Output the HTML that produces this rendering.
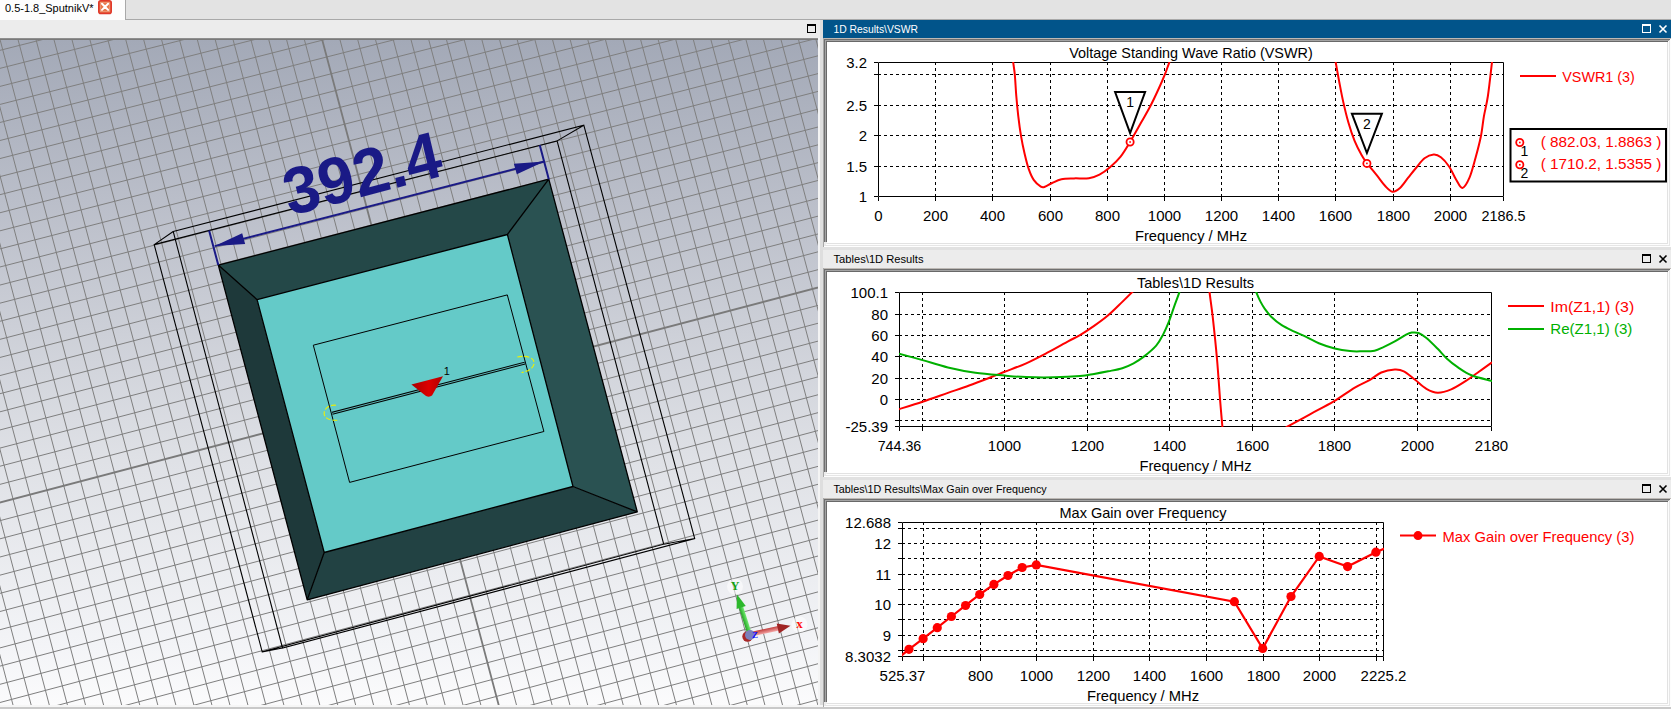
<!DOCTYPE html>
<html><head><meta charset="utf-8"><style>
html,body{margin:0;padding:0;width:1671px;height:709px;overflow:hidden;background:#c9c9c9}
svg{position:absolute;left:0;top:0;font-family:"Liberation Sans", sans-serif}
</style></head><body>
<svg width="1671" height="709" viewBox="0 0 1671 709">
<defs><linearGradient id="bg3d" x1="0" y1="0" x2="0" y2="1"><stop offset="0" stop-color="#a3a9b7"/><stop offset="0.24" stop-color="#babec9"/><stop offset="0.633" stop-color="#dfe1e6"/><stop offset="0.91" stop-color="#f3f4f7"/><stop offset="1" stop-color="#fbfbfc"/></linearGradient><clipPath id="clipv"><rect x="0" y="40" width="818" height="665"/></clipPath></defs>
<rect x="0" y="40" width="818" height="665" fill="url(#bg3d)" />
<g clip-path="url(#clipv)">
<path d="M-192.46 63.02L40.49 946.97M-175.48 58.72L57.45 942.36M-158.50 54.42L74.40 937.76M-141.53 50.13L91.33 933.15M-124.58 45.84L108.26 928.55M-107.64 41.55L125.17 923.95M-90.71 37.26L142.08 919.36M-73.79 32.98L158.97 914.77M-56.88 28.70L175.85 910.18M-39.98 24.42L192.72 905.59M-23.10 20.15L209.57 901.01M-6.22 15.88L226.42 896.43M10.64 11.61L243.25 891.86M27.49 7.34L260.08 887.28M44.33 3.08L276.89 882.71M61.16 -1.18L293.69 878.15M77.98 -5.43L310.48 873.58M94.79 -9.69L327.26 869.02M111.58 -13.94L344.03 864.46M128.37 -18.19L360.78 859.91M145.14 -22.43L377.53 855.36M161.90 -26.68L394.26 850.81M178.65 -30.92L410.98 846.26M195.39 -35.15L427.70 841.72M212.12 -39.39L444.40 837.18M228.84 -43.62L461.09 832.65M245.55 -47.85L477.76 828.11M262.24 -52.07L494.43 823.58M278.93 -56.30L511.09 819.05M312.26 -64.74L544.36 810.01M328.91 -68.95L560.99 805.49M345.55 -73.16L577.60 800.97M362.18 -77.37L594.20 796.46M378.80 -81.58L610.79 791.95M395.41 -85.78L627.36 787.45M412.00 -89.98L643.93 782.94M428.59 -94.18L660.49 778.44M445.16 -98.37L677.03 773.95M461.72 -102.57L693.57 769.45M478.28 -106.76L710.09 764.96M494.82 -110.94L726.60 760.47M511.35 -115.13L743.10 755.99M527.87 -119.31L759.59 751.50M544.37 -123.49L776.07 747.02M560.87 -127.66L792.54 742.55M577.36 -131.84L809.00 738.07M593.83 -136.01L825.45 733.60M610.30 -140.17L841.88 729.14M626.75 -144.34L858.31 724.67M643.19 -148.50L874.72 720.21M659.63 -152.66L891.12 715.75M676.05 -156.82L907.52 711.30M692.46 -160.97L923.90 706.84M708.86 -165.12L940.27 702.39M725.25 -169.27L956.63 697.95M741.62 -173.42L972.98 693.50M757.99 -177.56L989.32 689.06M774.35 -181.70L1005.64 684.62M790.69 -185.84L1021.96 680.19M-192.46 63.02L790.69 -185.84M-188.00 79.97L795.13 -169.23M-183.53 96.92L799.56 -152.62M-179.06 113.88L804.00 -136.01M-174.59 130.83L808.44 -119.40M-170.12 147.79L812.87 -102.78M-165.65 164.75L817.31 -86.17M-161.18 181.71L821.75 -69.55M-156.71 198.67L826.19 -52.93M-152.24 215.64L830.62 -36.31M-147.77 232.61L835.06 -19.68M-143.30 249.58L839.50 -3.06M-138.83 266.55L843.94 13.57M-134.35 283.52L848.38 30.20M-129.88 300.49L852.83 46.83M-125.41 317.47L857.27 63.46M-120.93 334.45L861.71 80.10M-116.46 351.43L866.15 96.74M-111.98 368.41L870.60 113.37M-107.51 385.40L875.04 130.02M-103.03 402.38L879.48 146.66M-98.55 419.37L883.93 163.30M-94.07 436.36L888.37 179.95M-89.60 453.36L892.82 196.60M-85.12 470.35L897.27 213.24M-80.64 487.35L901.71 229.90M-76.16 504.34L906.16 246.55M-67.20 538.35L915.06 279.86M-62.72 555.35L919.50 296.52M-58.24 572.36L923.95 313.18M-53.75 589.36L928.40 329.84M-49.27 606.37L932.85 346.51M-44.79 623.38L937.30 363.17M-40.30 640.40L941.75 379.84M-35.82 657.41L946.21 396.51M-31.33 674.43L950.66 413.18M-26.85 691.45L955.11 429.86M-22.36 708.47L959.56 446.53M-17.88 725.49L964.02 463.21M-13.39 742.52L968.47 479.89M-8.90 759.55L972.93 496.57M-4.42 776.58L977.38 513.26M0.07 793.61L981.84 529.94M4.56 810.64L986.29 546.63M9.05 827.67L990.75 563.32M13.54 844.71L995.21 580.01M18.03 861.75L999.66 596.70M22.52 878.79L1004.12 613.39M27.01 895.83L1008.58 630.09M31.50 912.88L1013.04 646.79M36.00 929.92L1017.50 663.49M40.49 946.97L1021.96 680.19" stroke="#7f7f7f" stroke-width="1" fill="none"/>
<path d="M295.60 -60.52L527.73 814.53M-71.68 521.34L910.61 263.20" stroke="#7a7a7a" stroke-width="1.8" fill="none"/>
<path d="M173.2 231.5L583.8 125.2L694.7 538.5L282.5 648.0Z M154.2 244.6L557.1 140.9L663.7 544.2L262.2 651.9Z M154.2 244.6L173.2 231.5 M583.8 125.2L557.1 140.9 M694.7 538.5L663.7 544.2 M262.2 651.9L282.5 648.0" stroke="#000" stroke-width="1.1" fill="none"/>
<polygon points="218.30,265.10 548.80,179.20 507.40,234.50 257.10,299.70" fill="#244848"/>
<polygon points="548.80,179.20 637.30,511.90 573.00,486.50 507.40,234.50" fill="#2a5252"/>
<polygon points="637.30,511.90 307.20,599.90 324.20,552.50 573.00,486.50" fill="#224243"/>
<polygon points="307.20,599.90 218.30,265.10 257.10,299.70 324.20,552.50" fill="#1e393a"/>
<polygon points="257.10,299.70 507.40,234.50 573.00,486.50 324.20,552.50" fill="#64cac8"/>
<path d="M218.3 265.1L548.8 179.2L637.3 511.9L307.2 599.9Z M257.1 299.7L507.4 234.5L573.0 486.5L324.2 552.5Z M218.3 265.1L257.1 299.7 M548.8 179.2L507.4 234.5 M637.3 511.9L573.0 486.5 M307.2 599.9L324.2 552.5" stroke="#000" stroke-width="1.3" fill="none" stroke-linejoin="round"/>
<polygon points="313.30,345.20 507.30,294.90 543.90,431.50 349.60,482.40" fill="none" stroke="#000" stroke-width="1"/>
<path d="M332.2 413.3 L524.9 363.1" stroke="#000" stroke-width="3" fill="none"/>
<path d="M332.2 413.3 L524.9 363.1" stroke="#66caca" stroke-width="0.9" fill="none"/>
<path d="M336 405.2 C322 403.5 317 423 339.8 420" stroke="#f0f000" stroke-width="1.1" fill="none" stroke-dasharray="5 2"/>
<path d="M517.3 357 C539 353 539 370 521.5 372.5" stroke="#f0f000" stroke-width="1.1" fill="none" stroke-dasharray="5 2"/>
<linearGradient id="gcone" x1="0" y1="0" x2="1" y2="0"><stop offset="0" stop-color="#a80000"/><stop offset="0.55" stop-color="#dd0000"/><stop offset="1" stop-color="#b00000"/></linearGradient>
<path d="M411.4 384.4 L443 376.2 L432 395.5 Q429.5 397.5 426 396 Z" fill="url(#gcone)"/>
<text x="446.80" y="374.80" font-size="11" fill="#000" text-anchor="middle" >1</text>
<path d="M209.1 230.6 L218.3 265.1 M539.8 145.3 L548.8 179.2" stroke="#1a1a86" stroke-width="2" fill="none"/>
<path d="M214.7 246.1 L544.3 161.5" stroke="#1a1a86" stroke-width="2" fill="none"/>
<polygon points="214.70,246.10 245.13,243.97 242.20,233.31" fill="#1a1a86"/>
<polygon points="544.30,161.50 513.87,163.63 516.80,174.29" fill="#1a1a86"/>
<text transform="matrix(0.9673,-0.2535,0.23,0.9732,289.5,216)" font-size="66" font-weight="bold" fill="#1a1a86" textLength="161" lengthAdjust="spacingAndGlyphs">392.4</text>
<circle cx="735" cy="586.5" r="8" fill="#ffffff" opacity="0.55"/>
<circle cx="799.5" cy="624.5" r="8" fill="#ffffff" opacity="0.55"/>
<linearGradient id="gy" gradientUnits="userSpaceOnUse" x1="751.6" y1="632.8" x2="747.4" y2="634.2"><stop offset="0" stop-color="#6fe86f"/><stop offset="1" stop-color="#1f9f1f"/></linearGradient>
<polygon points="751.59,632.83 742.96,605.91 738.77,607.25 747.41,634.17" fill="url(#gy)"/>
<polygon points="736.90,594.20 745.75,606.07 736.60,609.00" fill="#2cb82c"/>
<linearGradient id="gx" gradientUnits="userSpaceOnUse" x1="752.5" y1="636.2" x2="751.5" y2="631.8"><stop offset="0" stop-color="#f0a0a0"/><stop offset="1" stop-color="#c03a3a"/></linearGradient>
<polygon points="752.48,636.25 779.24,630.55 778.28,626.05 751.52,631.75" fill="url(#gx)"/>
<polygon points="790.50,625.80 778.87,633.59 776.70,623.42" fill="#a02424"/>
<circle cx="747.5" cy="636.5" r="5.2" fill="#a82828"/>
<circle cx="750" cy="635" r="5" fill="#7a80bb"/>
<text x="755" y="638" font-size="9" font-weight="bold" fill="#1010ff" font-family="Liberation Serif" text-anchor="middle">Z</text>
<text x="735.2" y="589.8" font-size="12" font-weight="bold" fill="#10a010" font-family="Liberation Serif" text-anchor="middle">Y</text>
<text x="799.5" y="627.8" font-size="13" font-weight="bold" fill="#ff1010" font-family="Liberation Serif" text-anchor="middle">x</text>
</g>
<rect x="0" y="0" width="1671" height="20" fill="#e3e3e3" />
<rect x="125" y="19" width="1546" height="1" fill="#a9a9a9" />
<rect x="125" y="0" width="1" height="20" fill="#a9a9a9" />
<rect x="0" y="0" width="125" height="20" fill="#fdfdfd" />
<text x="5.00" y="11.50" font-size="11" fill="#000" text-anchor="start" textLength="88.50" lengthAdjust="spacingAndGlyphs" >0.5-1.8_SputnikV*</text>
<rect x="98.8" y="0.8" width="12.4" height="12.6" rx="2" ry="2" fill="#e9784a" stroke="#e0382a" stroke-width="1.6"/><rect x="100.5" y="2.5" width="9" height="9" fill="none" stroke="#ee9a78" stroke-width="0.8"/>
<path d="M102 3.8 L108.1 9.9 M108.1 3.8 L102 9.9" stroke="#fff" stroke-width="2" stroke-linecap="round"/>
<rect x="0" y="20" width="823" height="18" fill="#ececec" />
<rect x="807.5" y="24.5" width="8" height="8" fill="none" stroke="#000" stroke-width="1"/>
<rect x="807" y="24" width="9" height="2" fill="#000" />
<rect x="0" y="38" width="818" height="1" fill="#8e8e8e" />
<rect x="0" y="39" width="818" height="1" fill="#7a7a7a" />
<rect x="818" y="38" width="2" height="671" fill="#f4f4f4" />
<rect x="820" y="20" width="3" height="689" fill="#dedede" />
<rect x="823" y="20" width="848" height="689" fill="#ececec" />
<rect x="0" y="705" width="823" height="2" fill="#f6f6f6" />
<rect x="0" y="707" width="1671" height="2" fill="#c9c9c9" />
<rect x="823" y="20" width="848" height="18" fill="#01548a" />
<rect x="823" y="38" width="848" height="1" fill="#bdb9b5" />
<rect x="823" y="38" width="1" height="209" fill="#a9a9a9" />
<rect x="824" y="39" width="847" height="1" fill="#6f6f6f" />
<rect x="824" y="39" width="1" height="203" fill="#6f6f6f" />
<rect x="825" y="40" width="846" height="1" fill="#a3a3a3" />
<rect x="825" y="40" width="1" height="202" fill="#a3a3a3" />
<rect x="826" y="41" width="845" height="1" fill="#696969" />
<rect x="826" y="41" width="1" height="201" fill="#696969" />
<rect x="827" y="42" width="840" height="201" fill="#ffffff" />
<rect x="1667" y="42" width="1" height="202" fill="#e2e2e2" />
<rect x="1668" y="41" width="1" height="204" fill="#fcfcfc" />
<rect x="1669" y="40" width="1" height="206" fill="#e6e6e6" />
<rect x="1670" y="39" width="1" height="208" fill="#fdfdfd" />
<rect x="827" y="243" width="841" height="1" fill="#e2e2e2" />
<rect x="826" y="244" width="843" height="1" fill="#fdfdfd" />
<rect x="825" y="245" width="845" height="1" fill="#e6e6e6" />
<rect x="824" y="246" width="847" height="1" fill="#fefefe" />
<text x="833.50" y="32.80" font-size="11" fill="#fff" text-anchor="start" textLength="84.50" lengthAdjust="spacingAndGlyphs" >1D Results\VSWR</text>
<rect x="1642.5" y="24.5" width="8" height="8" fill="none" stroke="#fff" stroke-width="1"/>
<rect x="1642" y="24" width="9" height="2" fill="#fff" />
<path d="M1659.5 25.5 L1666.5 32.5 M1666.5 25.5 L1659.5 32.5" stroke="#fff" stroke-width="1.6"/>
<rect x="823" y="247" width="848" height="3" fill="#e1e1e1" />
<rect x="823" y="268" width="848" height="1" fill="#bdb9b5" />
<rect x="823" y="268" width="1" height="209" fill="#a9a9a9" />
<rect x="824" y="269" width="847" height="1" fill="#6f6f6f" />
<rect x="824" y="269" width="1" height="203" fill="#6f6f6f" />
<rect x="825" y="270" width="846" height="1" fill="#a3a3a3" />
<rect x="825" y="270" width="1" height="202" fill="#a3a3a3" />
<rect x="826" y="271" width="845" height="1" fill="#696969" />
<rect x="826" y="271" width="1" height="201" fill="#696969" />
<rect x="827" y="272" width="840" height="201" fill="#ffffff" />
<rect x="1667" y="272" width="1" height="202" fill="#e2e2e2" />
<rect x="1668" y="271" width="1" height="204" fill="#fcfcfc" />
<rect x="1669" y="270" width="1" height="206" fill="#e6e6e6" />
<rect x="1670" y="269" width="1" height="208" fill="#fdfdfd" />
<rect x="827" y="473" width="841" height="1" fill="#e2e2e2" />
<rect x="826" y="474" width="843" height="1" fill="#fdfdfd" />
<rect x="825" y="475" width="845" height="1" fill="#e6e6e6" />
<rect x="824" y="476" width="847" height="1" fill="#fefefe" />
<text x="833.50" y="262.80" font-size="11" fill="#000" text-anchor="start" textLength="90.00" lengthAdjust="spacingAndGlyphs" >Tables\1D Results</text>
<rect x="1642.5" y="254.5" width="8" height="8" fill="none" stroke="#000" stroke-width="1"/>
<rect x="1642" y="254" width="9" height="2" fill="#000" />
<path d="M1659.5 255.5 L1666.5 262.5 M1666.5 255.5 L1659.5 262.5" stroke="#000" stroke-width="1.6"/>
<rect x="823" y="477" width="848" height="3" fill="#e1e1e1" />
<rect x="823" y="498" width="848" height="1" fill="#bdb9b5" />
<rect x="823" y="498" width="1" height="209" fill="#a9a9a9" />
<rect x="824" y="499" width="847" height="1" fill="#6f6f6f" />
<rect x="824" y="499" width="1" height="203" fill="#6f6f6f" />
<rect x="825" y="500" width="846" height="1" fill="#a3a3a3" />
<rect x="825" y="500" width="1" height="202" fill="#a3a3a3" />
<rect x="826" y="501" width="845" height="1" fill="#696969" />
<rect x="826" y="501" width="1" height="201" fill="#696969" />
<rect x="827" y="502" width="840" height="201" fill="#ffffff" />
<rect x="1667" y="502" width="1" height="202" fill="#e2e2e2" />
<rect x="1668" y="501" width="1" height="204" fill="#fcfcfc" />
<rect x="1669" y="500" width="1" height="206" fill="#e6e6e6" />
<rect x="1670" y="499" width="1" height="208" fill="#fdfdfd" />
<rect x="827" y="703" width="841" height="1" fill="#e2e2e2" />
<rect x="826" y="704" width="843" height="1" fill="#fdfdfd" />
<rect x="825" y="705" width="845" height="1" fill="#e6e6e6" />
<rect x="824" y="706" width="847" height="1" fill="#fefefe" />
<text x="833.50" y="492.80" font-size="11" fill="#000" text-anchor="start" textLength="213.20" lengthAdjust="spacingAndGlyphs" >Tables\1D Results\Max Gain over Frequency</text>
<rect x="1642.5" y="484.5" width="8" height="8" fill="none" stroke="#000" stroke-width="1"/>
<rect x="1642" y="484" width="9" height="2" fill="#000" />
<path d="M1659.5 485.5 L1666.5 492.5 M1666.5 485.5 L1659.5 492.5" stroke="#000" stroke-width="1.6"/>
<defs></defs>
<clipPath id="clip1"><rect x="878" y="62" width="626" height="135"/></clipPath>
<line x1="935.5" y1="62" x2="935.5" y2="196" stroke="#000" stroke-width="1" stroke-dasharray="3 3"/>
<line x1="992.5" y1="62" x2="992.5" y2="196" stroke="#000" stroke-width="1" stroke-dasharray="3 3"/>
<line x1="1050.5" y1="62" x2="1050.5" y2="196" stroke="#000" stroke-width="1" stroke-dasharray="3 3"/>
<line x1="1107.5" y1="62" x2="1107.5" y2="196" stroke="#000" stroke-width="1" stroke-dasharray="3 3"/>
<line x1="1164.5" y1="62" x2="1164.5" y2="196" stroke="#000" stroke-width="1" stroke-dasharray="3 3"/>
<line x1="1221.5" y1="62" x2="1221.5" y2="196" stroke="#000" stroke-width="1" stroke-dasharray="3 3"/>
<line x1="1278.5" y1="62" x2="1278.5" y2="196" stroke="#000" stroke-width="1" stroke-dasharray="3 3"/>
<line x1="1335.5" y1="62" x2="1335.5" y2="196" stroke="#000" stroke-width="1" stroke-dasharray="3 3"/>
<line x1="1393.5" y1="62" x2="1393.5" y2="196" stroke="#000" stroke-width="1" stroke-dasharray="3 3"/>
<line x1="1450.5" y1="62" x2="1450.5" y2="196" stroke="#000" stroke-width="1" stroke-dasharray="3 3"/>
<line x1="878" y1="74.5" x2="1503" y2="74.5" stroke="#000" stroke-width="1" stroke-dasharray="3 3"/>
<line x1="878" y1="105.5" x2="1503" y2="105.5" stroke="#000" stroke-width="1" stroke-dasharray="3 3"/>
<line x1="878" y1="135.5" x2="1503" y2="135.5" stroke="#000" stroke-width="1" stroke-dasharray="3 3"/>
<line x1="878" y1="166.5" x2="1503" y2="166.5" stroke="#000" stroke-width="1" stroke-dasharray="3 3"/>
<path d="M878.5 62.5 H1503.5 V196.5 H878.5 Z" fill="none" stroke="#000" stroke-width="1"/>
<line x1="874" y1="62.5" x2="878" y2="62.5" stroke="#000" stroke-width="1"/>
<line x1="874" y1="74.5" x2="878" y2="74.5" stroke="#000" stroke-width="1"/>
<line x1="874" y1="105.5" x2="878" y2="105.5" stroke="#000" stroke-width="1"/>
<line x1="874" y1="135.5" x2="878" y2="135.5" stroke="#000" stroke-width="1"/>
<line x1="874" y1="166.5" x2="878" y2="166.5" stroke="#000" stroke-width="1"/>
<line x1="874" y1="196.5" x2="878" y2="196.5" stroke="#000" stroke-width="1"/>
<line x1="878.5" y1="197" x2="878.5" y2="201" stroke="#000" stroke-width="1"/>
<line x1="935.5" y1="197" x2="935.5" y2="201" stroke="#000" stroke-width="1"/>
<line x1="992.5" y1="197" x2="992.5" y2="201" stroke="#000" stroke-width="1"/>
<line x1="1050.5" y1="197" x2="1050.5" y2="201" stroke="#000" stroke-width="1"/>
<line x1="1107.5" y1="197" x2="1107.5" y2="201" stroke="#000" stroke-width="1"/>
<line x1="1164.5" y1="197" x2="1164.5" y2="201" stroke="#000" stroke-width="1"/>
<line x1="1221.5" y1="197" x2="1221.5" y2="201" stroke="#000" stroke-width="1"/>
<line x1="1278.5" y1="197" x2="1278.5" y2="201" stroke="#000" stroke-width="1"/>
<line x1="1335.5" y1="197" x2="1335.5" y2="201" stroke="#000" stroke-width="1"/>
<line x1="1393.5" y1="197" x2="1393.5" y2="201" stroke="#000" stroke-width="1"/>
<line x1="1450.5" y1="197" x2="1450.5" y2="201" stroke="#000" stroke-width="1"/>
<line x1="1503.5" y1="197" x2="1503.5" y2="201" stroke="#000" stroke-width="1"/>
<text x="878.50" y="220.80" font-size="15" fill="#000" text-anchor="middle" >0</text>
<text x="935.50" y="220.80" font-size="15" fill="#000" text-anchor="middle" >200</text>
<text x="992.50" y="220.80" font-size="15" fill="#000" text-anchor="middle" >400</text>
<text x="1050.50" y="220.80" font-size="15" fill="#000" text-anchor="middle" >600</text>
<text x="1107.50" y="220.80" font-size="15" fill="#000" text-anchor="middle" >800</text>
<text x="1164.50" y="220.80" font-size="15" fill="#000" text-anchor="middle" >1000</text>
<text x="1221.50" y="220.80" font-size="15" fill="#000" text-anchor="middle" >1200</text>
<text x="1278.50" y="220.80" font-size="15" fill="#000" text-anchor="middle" >1400</text>
<text x="1335.50" y="220.80" font-size="15" fill="#000" text-anchor="middle" >1600</text>
<text x="1393.50" y="220.80" font-size="15" fill="#000" text-anchor="middle" >1800</text>
<text x="1450.50" y="220.80" font-size="15" fill="#000" text-anchor="middle" >2000</text>
<text x="1503.50" y="220.80" font-size="15" fill="#000" text-anchor="middle" textLength="44.00" lengthAdjust="spacingAndGlyphs" >2186.5</text>
<text x="867.00" y="68.20" font-size="15" fill="#000" text-anchor="end" textLength="20.70" lengthAdjust="spacingAndGlyphs" >3.2</text>
<text x="867.00" y="111.20" font-size="15" fill="#000" text-anchor="end" >2.5</text>
<text x="867.00" y="141.20" font-size="15" fill="#000" text-anchor="end" >2</text>
<text x="867.00" y="172.20" font-size="15" fill="#000" text-anchor="end" >1.5</text>
<text x="867.00" y="202.20" font-size="15" fill="#000" text-anchor="end" >1</text>
<text x="1191.00" y="57.50" font-size="15" fill="#000" text-anchor="middle" textLength="243.50" lengthAdjust="spacingAndGlyphs" >Voltage Standing Wave Ratio (VSWR)</text>
<text x="1191.00" y="240.90" font-size="15" fill="#000" text-anchor="middle" textLength="112.20" lengthAdjust="spacingAndGlyphs" >Frequency / MHz</text>
<path d="M1012.20 50.00 C1012.37 52.03 1012.77 58.12 1013.20 62.20 C1013.63 66.28 1014.28 68.87 1014.80 74.50 C1015.32 80.13 1015.72 89.02 1016.30 96.00 C1016.88 102.98 1017.52 109.75 1018.30 116.40 C1019.08 123.05 1019.97 129.75 1021.00 135.90 C1022.03 142.05 1023.23 147.83 1024.50 153.30 C1025.77 158.77 1027.07 164.27 1028.60 168.70 C1030.13 173.13 1031.67 176.92 1033.70 179.90 C1035.73 182.88 1038.93 185.45 1040.80 186.60 C1042.67 187.75 1043.02 187.40 1044.90 186.80 C1046.78 186.20 1049.35 184.27 1052.10 183.00 C1054.85 181.73 1057.75 179.97 1061.40 179.20 C1065.05 178.43 1069.42 178.57 1074.00 178.40 C1078.58 178.23 1084.65 178.83 1088.90 178.20 C1093.15 177.57 1095.98 176.43 1099.50 174.60 C1103.02 172.77 1106.48 170.20 1110.00 167.20 C1113.52 164.20 1117.27 160.80 1120.60 156.60 C1123.93 152.40 1126.53 147.77 1130.00 142.00 C1133.47 136.23 1137.93 128.13 1141.40 122.00 C1144.87 115.87 1147.90 110.78 1150.80 105.20 C1153.70 99.62 1156.45 93.63 1158.80 88.50 C1161.15 83.37 1163.15 78.75 1164.90 74.40 C1166.65 70.05 1168.03 65.63 1169.30 62.40 C1170.57 59.17 1171.97 56.23 1172.50 55.00" fill="none" stroke="#ff0000" stroke-width="2" stroke-linejoin="round" clip-path="url(#clip1)"/>
<path d="M1333.50 50.00 C1333.87 52.03 1334.75 56.93 1335.70 62.20 C1336.65 67.47 1337.93 74.95 1339.20 81.60 C1340.47 88.25 1341.77 95.28 1343.30 102.10 C1344.83 108.92 1346.52 116.03 1348.40 122.50 C1350.28 128.97 1352.38 135.43 1354.60 140.90 C1356.82 146.37 1359.67 151.65 1361.70 155.30 C1363.73 158.95 1364.23 159.40 1366.80 162.80 C1369.37 166.20 1374.03 171.83 1377.10 175.70 C1380.17 179.57 1382.65 183.33 1385.20 186.00 C1387.75 188.67 1389.93 191.37 1392.40 191.70 C1394.87 192.03 1397.37 190.33 1400.00 188.00 C1402.63 185.67 1405.47 181.12 1408.20 177.70 C1410.93 174.28 1413.68 170.73 1416.40 167.50 C1419.12 164.27 1421.62 160.45 1424.50 158.30 C1427.38 156.15 1430.97 154.77 1433.70 154.60 C1436.43 154.43 1438.33 155.32 1440.90 157.30 C1443.47 159.28 1446.55 162.77 1449.10 166.50 C1451.65 170.23 1453.98 176.12 1456.20 179.70 C1458.42 183.28 1460.18 188.33 1462.40 188.00 C1464.62 187.67 1467.28 182.82 1469.50 177.70 C1471.72 172.58 1473.82 164.12 1475.70 157.30 C1477.58 150.48 1479.43 143.62 1480.80 136.80 C1482.17 129.98 1482.72 123.20 1483.90 116.40 C1485.08 109.60 1486.55 105.03 1487.90 96.00 C1489.25 86.97 1491.07 69.87 1492.00 62.20 C1492.93 54.53 1493.25 52.03 1493.50 50.00" fill="none" stroke="#ff0000" stroke-width="2" stroke-linejoin="round" clip-path="url(#clip1)"/>
<path d="M1115.1 92.0 H1145.1 L1130.1 133.0 Z" fill="#fff" stroke="#000" stroke-width="2" stroke-linejoin="miter"/>
<text x="1130.10" y="107.20" font-size="14" fill="#000" text-anchor="middle" >1</text>
<circle cx="1130.1" cy="142.0" r="3.6" fill="#fff" stroke="#ff0000" stroke-width="1.8"/>
<rect x="1129.3" y="141.2" width="1.6" height="1.6" fill="#ff0000"/>
<path d="M1351.9 113.7 H1381.9 L1366.9 153.0 Z" fill="#fff" stroke="#000" stroke-width="2" stroke-linejoin="miter"/>
<text x="1366.90" y="128.70" font-size="14" fill="#000" text-anchor="middle" >2</text>
<circle cx="1366.9" cy="163.4" r="3.6" fill="#fff" stroke="#ff0000" stroke-width="1.8"/>
<rect x="1366.1" y="162.6" width="1.6" height="1.6" fill="#ff0000"/>
<line x1="1520" y1="76" x2="1556" y2="76" stroke="#ff0000" stroke-width="2"/>
<text x="1562.30" y="82.00" font-size="15" fill="#ff0000" text-anchor="start" textLength="72.40" lengthAdjust="spacingAndGlyphs" >VSWR1 (3)</text>
<rect x="1510.5" y="129" width="155.5" height="52.5" fill="none" stroke="#000" stroke-width="2"/>
<circle cx="1519.8" cy="142.5" r="3.6" fill="none" stroke="#ff0000" stroke-width="1.8"/>
<rect x="1519" y="141.7" width="1.6" height="1.6" fill="#ff0000"/>
<text x="1540.70" y="147.10" font-size="15" fill="#ff0000" text-anchor="start" textLength="120.60" lengthAdjust="spacingAndGlyphs" >( 882.03, 1.8863 )</text>
<text x="1524.50" y="156.10" font-size="14" fill="#000" text-anchor="middle" >1</text>
<circle cx="1519.8" cy="164.8" r="3.6" fill="none" stroke="#ff0000" stroke-width="1.8"/>
<rect x="1519" y="164.0" width="1.6" height="1.6" fill="#ff0000"/>
<text x="1540.70" y="169.40" font-size="15" fill="#ff0000" text-anchor="start" textLength="120.60" lengthAdjust="spacingAndGlyphs" >( 1710.2, 1.5355 )</text>
<text x="1524.50" y="178.40" font-size="14" fill="#000" text-anchor="middle" >2</text>
<clipPath id="clip2"><rect x="899" y="292" width="593" height="135"/></clipPath>
<line x1="922.5" y1="292" x2="922.5" y2="426" stroke="#000" stroke-width="1" stroke-dasharray="3 3"/>
<line x1="1004.5" y1="292" x2="1004.5" y2="426" stroke="#000" stroke-width="1" stroke-dasharray="3 3"/>
<line x1="1087.5" y1="292" x2="1087.5" y2="426" stroke="#000" stroke-width="1" stroke-dasharray="3 3"/>
<line x1="1169.5" y1="292" x2="1169.5" y2="426" stroke="#000" stroke-width="1" stroke-dasharray="3 3"/>
<line x1="1252.5" y1="292" x2="1252.5" y2="426" stroke="#000" stroke-width="1" stroke-dasharray="3 3"/>
<line x1="1334.5" y1="292" x2="1334.5" y2="426" stroke="#000" stroke-width="1" stroke-dasharray="3 3"/>
<line x1="1417.5" y1="292" x2="1417.5" y2="426" stroke="#000" stroke-width="1" stroke-dasharray="3 3"/>
<line x1="899" y1="314.5" x2="1491" y2="314.5" stroke="#000" stroke-width="1" stroke-dasharray="3 3"/>
<line x1="899" y1="335.5" x2="1491" y2="335.5" stroke="#000" stroke-width="1" stroke-dasharray="3 3"/>
<line x1="899" y1="356.5" x2="1491" y2="356.5" stroke="#000" stroke-width="1" stroke-dasharray="3 3"/>
<line x1="899" y1="378.5" x2="1491" y2="378.5" stroke="#000" stroke-width="1" stroke-dasharray="3 3"/>
<line x1="899" y1="399.5" x2="1491" y2="399.5" stroke="#000" stroke-width="1" stroke-dasharray="3 3"/>
<line x1="899" y1="420.5" x2="1491" y2="420.5" stroke="#000" stroke-width="1" stroke-dasharray="3 3"/>
<path d="M899.5 292.5 H1491.5 V426.5 H899.5 Z" fill="none" stroke="#000" stroke-width="1"/>
<line x1="895" y1="292.5" x2="899" y2="292.5" stroke="#000" stroke-width="1"/>
<line x1="895" y1="314.5" x2="899" y2="314.5" stroke="#000" stroke-width="1"/>
<line x1="895" y1="335.5" x2="899" y2="335.5" stroke="#000" stroke-width="1"/>
<line x1="895" y1="356.5" x2="899" y2="356.5" stroke="#000" stroke-width="1"/>
<line x1="895" y1="378.5" x2="899" y2="378.5" stroke="#000" stroke-width="1"/>
<line x1="895" y1="399.5" x2="899" y2="399.5" stroke="#000" stroke-width="1"/>
<line x1="895" y1="420.5" x2="899" y2="420.5" stroke="#000" stroke-width="1"/>
<line x1="895" y1="426.5" x2="899" y2="426.5" stroke="#000" stroke-width="1"/>
<line x1="899.5" y1="427" x2="899.5" y2="431" stroke="#000" stroke-width="1"/>
<line x1="922.5" y1="427" x2="922.5" y2="431" stroke="#000" stroke-width="1"/>
<line x1="1004.5" y1="427" x2="1004.5" y2="431" stroke="#000" stroke-width="1"/>
<line x1="1087.5" y1="427" x2="1087.5" y2="431" stroke="#000" stroke-width="1"/>
<line x1="1169.5" y1="427" x2="1169.5" y2="431" stroke="#000" stroke-width="1"/>
<line x1="1252.5" y1="427" x2="1252.5" y2="431" stroke="#000" stroke-width="1"/>
<line x1="1334.5" y1="427" x2="1334.5" y2="431" stroke="#000" stroke-width="1"/>
<line x1="1417.5" y1="427" x2="1417.5" y2="431" stroke="#000" stroke-width="1"/>
<line x1="1491.5" y1="427" x2="1491.5" y2="431" stroke="#000" stroke-width="1"/>
<text x="899.50" y="450.80" font-size="15" fill="#000" text-anchor="middle" textLength="43.60" lengthAdjust="spacingAndGlyphs" >744.36</text>
<text x="1004.50" y="450.80" font-size="15" fill="#000" text-anchor="middle" >1000</text>
<text x="1087.50" y="450.80" font-size="15" fill="#000" text-anchor="middle" >1200</text>
<text x="1169.50" y="450.80" font-size="15" fill="#000" text-anchor="middle" >1400</text>
<text x="1252.50" y="450.80" font-size="15" fill="#000" text-anchor="middle" >1600</text>
<text x="1334.50" y="450.80" font-size="15" fill="#000" text-anchor="middle" >1800</text>
<text x="1417.50" y="450.80" font-size="15" fill="#000" text-anchor="middle" >2000</text>
<text x="1491.50" y="450.80" font-size="15" fill="#000" text-anchor="middle" >2180</text>
<text x="888.00" y="298.20" font-size="15" fill="#000" text-anchor="end" >100.1</text>
<text x="888.00" y="320.20" font-size="15" fill="#000" text-anchor="end" >80</text>
<text x="888.00" y="341.20" font-size="15" fill="#000" text-anchor="end" >60</text>
<text x="888.00" y="362.20" font-size="15" fill="#000" text-anchor="end" >40</text>
<text x="888.00" y="384.20" font-size="15" fill="#000" text-anchor="end" >20</text>
<text x="888.00" y="405.20" font-size="15" fill="#000" text-anchor="end" >0</text>
<text x="888.00" y="432.20" font-size="15" fill="#000" text-anchor="end" >-25.39</text>
<text x="1195.50" y="287.50" font-size="15" fill="#000" text-anchor="middle" textLength="117.10" lengthAdjust="spacingAndGlyphs" >Tables\1D Results</text>
<text x="1195.50" y="470.90" font-size="15" fill="#000" text-anchor="middle" textLength="112.20" lengthAdjust="spacingAndGlyphs" >Frequency / MHz</text>
<path d="M899.00 409.20 C902.92 407.97 914.35 404.52 922.50 401.80 C930.65 399.08 940.13 395.62 947.90 392.90 C955.67 390.18 962.05 388.07 969.10 385.50 C976.15 382.93 984.28 379.78 990.20 377.50 C996.12 375.22 998.60 374.17 1004.60 371.80 C1010.60 369.43 1019.07 366.48 1026.20 363.30 C1033.33 360.12 1040.35 356.40 1047.40 352.70 C1054.45 349.00 1063.07 344.03 1068.50 341.10 C1073.93 338.17 1075.73 337.63 1080.00 335.10 C1084.27 332.57 1089.40 329.20 1094.10 325.90 C1098.80 322.60 1103.50 319.30 1108.20 315.30 C1112.90 311.30 1118.30 305.77 1122.30 301.90 C1126.30 298.03 1129.25 295.08 1132.20 292.10 C1135.15 289.12 1138.70 285.35 1140.00 284.00" fill="none" stroke="#ff0000" stroke-width="2" stroke-linejoin="round" clip-path="url(#clip2)"/>
<path d="M1209.00 280.00 C1209.10 282.07 1208.98 286.28 1209.60 292.40 C1210.22 298.52 1211.47 305.60 1212.70 316.70 C1213.93 327.80 1215.75 344.88 1217.00 359.00 C1218.25 373.12 1219.32 390.28 1220.20 401.40 C1221.08 412.52 1221.83 419.93 1222.30 425.70 C1222.77 431.47 1222.88 434.28 1223.00 436.00" fill="none" stroke="#ff0000" stroke-width="2" stroke-linejoin="round" clip-path="url(#clip2)"/>
<path d="M1282.00 430.00 C1283.20 429.28 1284.47 428.35 1289.20 425.70 C1293.93 423.05 1302.98 418.15 1310.40 414.10 C1317.82 410.05 1326.30 405.82 1333.70 401.40 C1341.10 396.98 1348.75 391.20 1354.80 387.60 C1360.85 384.00 1365.58 382.32 1370.00 379.80 C1374.42 377.28 1377.17 374.20 1381.30 372.50 C1385.43 370.80 1391.05 369.80 1394.80 369.60 C1398.55 369.40 1400.42 369.60 1403.80 371.30 C1407.18 373.00 1411.33 376.88 1415.10 379.80 C1418.87 382.72 1422.63 386.63 1426.40 388.80 C1430.17 390.97 1433.57 392.70 1437.70 392.80 C1441.83 392.90 1446.50 391.38 1451.20 389.40 C1455.90 387.42 1461.57 383.63 1465.90 380.90 C1470.23 378.17 1472.97 376.00 1477.20 373.00 C1481.43 370.00 1487.50 365.57 1491.30 362.90 C1495.10 360.23 1498.55 357.98 1500.00 357.00" fill="none" stroke="#ff0000" stroke-width="2" stroke-linejoin="round" clip-path="url(#clip2)"/>
<path d="M899.00 353.60 C902.92 354.68 914.35 357.78 922.50 360.10 C930.65 362.42 939.08 365.38 947.90 367.50 C956.72 369.62 965.95 371.45 975.40 372.80 C984.85 374.15 996.13 374.88 1004.60 375.60 C1013.07 376.32 1018.02 376.82 1026.20 377.10 C1034.38 377.38 1044.73 377.48 1053.70 377.30 C1062.67 377.12 1073.27 376.57 1080.00 376.00 C1086.73 375.43 1089.40 374.68 1094.10 373.90 C1098.80 373.12 1103.50 372.25 1108.20 371.30 C1112.90 370.35 1118.07 369.53 1122.30 368.20 C1126.53 366.87 1130.07 365.18 1133.60 363.30 C1137.13 361.42 1139.73 359.85 1143.50 356.90 C1147.27 353.95 1152.92 349.35 1156.20 345.60 C1159.48 341.85 1161.08 338.38 1163.20 334.40 C1165.32 330.42 1167.13 326.17 1168.90 321.70 C1170.67 317.23 1172.05 312.53 1173.80 307.60 C1175.55 302.67 1177.95 296.37 1179.40 292.10 C1180.85 287.83 1181.98 283.68 1182.50 282.00" fill="none" stroke="#00b000" stroke-width="2" stroke-linejoin="round" clip-path="url(#clip2)"/>
<path d="M1253.00 283.00 C1253.55 284.57 1255.03 289.25 1256.30 292.40 C1257.57 295.55 1259.18 299.17 1260.60 301.90 C1262.02 304.63 1263.03 306.33 1264.80 308.80 C1266.57 311.27 1268.38 313.97 1271.20 316.70 C1274.02 319.43 1277.83 322.72 1281.70 325.20 C1285.57 327.68 1290.17 329.57 1294.40 331.60 C1298.63 333.63 1303.03 335.47 1307.10 337.40 C1311.17 339.33 1314.20 341.35 1318.80 343.20 C1323.40 345.05 1329.50 347.18 1334.70 348.50 C1339.90 349.82 1345.45 350.63 1350.00 351.10 C1354.55 351.57 1357.92 351.37 1362.00 351.30 C1366.08 351.23 1370.92 351.40 1374.50 350.70 C1378.08 350.00 1380.12 348.65 1383.50 347.10 C1386.88 345.55 1391.03 343.47 1394.80 341.40 C1398.57 339.33 1403.28 336.17 1406.10 334.70 C1408.92 333.23 1409.63 332.88 1411.70 332.60 C1413.77 332.32 1416.05 332.10 1418.50 333.00 C1420.95 333.90 1423.20 335.37 1426.40 338.00 C1429.60 340.63 1434.32 345.40 1437.70 348.80 C1441.08 352.20 1443.32 355.30 1446.70 358.40 C1450.08 361.50 1453.87 364.58 1458.00 367.40 C1462.13 370.22 1465.95 373.05 1471.50 375.30 C1477.05 377.55 1486.55 379.62 1491.30 380.90 C1496.05 382.18 1498.55 382.65 1500.00 383.00" fill="none" stroke="#00b000" stroke-width="2" stroke-linejoin="round" clip-path="url(#clip2)"/>
<line x1="1508" y1="306" x2="1544" y2="306" stroke="#ff0000" stroke-width="2"/>
<text x="1550.30" y="311.50" font-size="15" fill="#ff0000" text-anchor="start" textLength="83.90" lengthAdjust="spacingAndGlyphs" >Im(Z1,1) (3)</text>
<line x1="1508" y1="329" x2="1544" y2="329" stroke="#00b000" stroke-width="2"/>
<text x="1550.30" y="334.40" font-size="15" fill="#00b000" text-anchor="start" textLength="82.10" lengthAdjust="spacingAndGlyphs" >Re(Z1,1) (3)</text>
<clipPath id="clip3"><rect x="902" y="522" width="482" height="135"/></clipPath>
<line x1="923.5" y1="522" x2="923.5" y2="656" stroke="#000" stroke-width="1" stroke-dasharray="3 3"/>
<line x1="980.5" y1="522" x2="980.5" y2="656" stroke="#000" stroke-width="1" stroke-dasharray="3 3"/>
<line x1="1036.5" y1="522" x2="1036.5" y2="656" stroke="#000" stroke-width="1" stroke-dasharray="3 3"/>
<line x1="1093.5" y1="522" x2="1093.5" y2="656" stroke="#000" stroke-width="1" stroke-dasharray="3 3"/>
<line x1="1149.5" y1="522" x2="1149.5" y2="656" stroke="#000" stroke-width="1" stroke-dasharray="3 3"/>
<line x1="1206.5" y1="522" x2="1206.5" y2="656" stroke="#000" stroke-width="1" stroke-dasharray="3 3"/>
<line x1="1263.5" y1="522" x2="1263.5" y2="656" stroke="#000" stroke-width="1" stroke-dasharray="3 3"/>
<line x1="1319.5" y1="522" x2="1319.5" y2="656" stroke="#000" stroke-width="1" stroke-dasharray="3 3"/>
<line x1="1376.5" y1="522" x2="1376.5" y2="656" stroke="#000" stroke-width="1" stroke-dasharray="3 3"/>
<line x1="902" y1="528.5" x2="1383" y2="528.5" stroke="#000" stroke-width="1" stroke-dasharray="3 3"/>
<line x1="902" y1="543.5" x2="1383" y2="543.5" stroke="#000" stroke-width="1" stroke-dasharray="3 3"/>
<line x1="902" y1="558.5" x2="1383" y2="558.5" stroke="#000" stroke-width="1" stroke-dasharray="3 3"/>
<line x1="902" y1="574.5" x2="1383" y2="574.5" stroke="#000" stroke-width="1" stroke-dasharray="3 3"/>
<line x1="902" y1="589.5" x2="1383" y2="589.5" stroke="#000" stroke-width="1" stroke-dasharray="3 3"/>
<line x1="902" y1="604.5" x2="1383" y2="604.5" stroke="#000" stroke-width="1" stroke-dasharray="3 3"/>
<line x1="902" y1="619.5" x2="1383" y2="619.5" stroke="#000" stroke-width="1" stroke-dasharray="3 3"/>
<line x1="902" y1="635.5" x2="1383" y2="635.5" stroke="#000" stroke-width="1" stroke-dasharray="3 3"/>
<line x1="902" y1="650.5" x2="1383" y2="650.5" stroke="#000" stroke-width="1" stroke-dasharray="3 3"/>
<path d="M902.5 522.5 H1383.5 V656.5 H902.5 Z" fill="none" stroke="#000" stroke-width="1"/>
<line x1="898" y1="522.5" x2="902" y2="522.5" stroke="#000" stroke-width="1"/>
<line x1="898" y1="528.5" x2="902" y2="528.5" stroke="#000" stroke-width="1"/>
<line x1="898" y1="543.5" x2="902" y2="543.5" stroke="#000" stroke-width="1"/>
<line x1="898" y1="558.5" x2="902" y2="558.5" stroke="#000" stroke-width="1"/>
<line x1="898" y1="574.5" x2="902" y2="574.5" stroke="#000" stroke-width="1"/>
<line x1="898" y1="589.5" x2="902" y2="589.5" stroke="#000" stroke-width="1"/>
<line x1="898" y1="604.5" x2="902" y2="604.5" stroke="#000" stroke-width="1"/>
<line x1="898" y1="619.5" x2="902" y2="619.5" stroke="#000" stroke-width="1"/>
<line x1="898" y1="635.5" x2="902" y2="635.5" stroke="#000" stroke-width="1"/>
<line x1="898" y1="650.5" x2="902" y2="650.5" stroke="#000" stroke-width="1"/>
<line x1="898" y1="656.5" x2="902" y2="656.5" stroke="#000" stroke-width="1"/>
<line x1="902.5" y1="657" x2="902.5" y2="661" stroke="#000" stroke-width="1"/>
<line x1="923.5" y1="657" x2="923.5" y2="661" stroke="#000" stroke-width="1"/>
<line x1="980.5" y1="657" x2="980.5" y2="661" stroke="#000" stroke-width="1"/>
<line x1="1036.5" y1="657" x2="1036.5" y2="661" stroke="#000" stroke-width="1"/>
<line x1="1093.5" y1="657" x2="1093.5" y2="661" stroke="#000" stroke-width="1"/>
<line x1="1149.5" y1="657" x2="1149.5" y2="661" stroke="#000" stroke-width="1"/>
<line x1="1206.5" y1="657" x2="1206.5" y2="661" stroke="#000" stroke-width="1"/>
<line x1="1263.5" y1="657" x2="1263.5" y2="661" stroke="#000" stroke-width="1"/>
<line x1="1319.5" y1="657" x2="1319.5" y2="661" stroke="#000" stroke-width="1"/>
<line x1="1376.5" y1="657" x2="1376.5" y2="661" stroke="#000" stroke-width="1"/>
<line x1="1383.5" y1="657" x2="1383.5" y2="661" stroke="#000" stroke-width="1"/>
<text x="902.50" y="680.80" font-size="15" fill="#000" text-anchor="middle" >525.37</text>
<text x="980.50" y="680.80" font-size="15" fill="#000" text-anchor="middle" >800</text>
<text x="1036.50" y="680.80" font-size="15" fill="#000" text-anchor="middle" >1000</text>
<text x="1093.50" y="680.80" font-size="15" fill="#000" text-anchor="middle" >1200</text>
<text x="1149.50" y="680.80" font-size="15" fill="#000" text-anchor="middle" >1400</text>
<text x="1206.50" y="680.80" font-size="15" fill="#000" text-anchor="middle" >1600</text>
<text x="1263.50" y="680.80" font-size="15" fill="#000" text-anchor="middle" >1800</text>
<text x="1319.50" y="680.80" font-size="15" fill="#000" text-anchor="middle" >2000</text>
<text x="1383.50" y="680.80" font-size="15" fill="#000" text-anchor="middle" >2225.2</text>
<text x="891.00" y="528.20" font-size="15" fill="#000" text-anchor="end" >12.688</text>
<text x="891.00" y="549.20" font-size="15" fill="#000" text-anchor="end" >12</text>
<text x="891.00" y="580.20" font-size="15" fill="#000" text-anchor="end" >11</text>
<text x="891.00" y="610.20" font-size="15" fill="#000" text-anchor="end" >10</text>
<text x="891.00" y="641.20" font-size="15" fill="#000" text-anchor="end" >9</text>
<text x="891.00" y="662.20" font-size="15" fill="#000" text-anchor="end" >8.3032</text>
<text x="1143.00" y="517.50" font-size="15" fill="#000" text-anchor="middle" textLength="167.00" lengthAdjust="spacingAndGlyphs" >Max Gain over Frequency</text>
<text x="1143.00" y="700.90" font-size="15" fill="#000" text-anchor="middle" textLength="112.20" lengthAdjust="spacingAndGlyphs" >Frequency / MHz</text>
<path d="M894.82 660.99 L908.97 649.28 L923.12 638.71 L937.27 627.71 L951.41 616.49 L965.56 605.49 L979.71 594.49 L993.86 584.40 L1008.01 575.51 L1022.16 567.50 L1036.31 564.91 L1234.38 601.70 L1262.68 648.46 L1290.98 596.51 L1319.28 556.47 L1347.57 566.56 L1375.87 552.19 L1404.17 539.97" fill="none" stroke="#ff0000" stroke-width="2.2" clip-path="url(#clip3)"/>
<circle cx="908.97" cy="649.28" r="4.6" fill="#ff0000" clip-path="url(#clip3)"/>
<circle cx="923.12" cy="638.71" r="4.6" fill="#ff0000" clip-path="url(#clip3)"/>
<circle cx="937.27" cy="627.71" r="4.6" fill="#ff0000" clip-path="url(#clip3)"/>
<circle cx="951.41" cy="616.49" r="4.6" fill="#ff0000" clip-path="url(#clip3)"/>
<circle cx="965.56" cy="605.49" r="4.6" fill="#ff0000" clip-path="url(#clip3)"/>
<circle cx="979.71" cy="594.49" r="4.6" fill="#ff0000" clip-path="url(#clip3)"/>
<circle cx="993.86" cy="584.40" r="4.6" fill="#ff0000" clip-path="url(#clip3)"/>
<circle cx="1008.01" cy="575.51" r="4.6" fill="#ff0000" clip-path="url(#clip3)"/>
<circle cx="1022.16" cy="567.50" r="4.6" fill="#ff0000" clip-path="url(#clip3)"/>
<circle cx="1036.31" cy="564.91" r="4.6" fill="#ff0000" clip-path="url(#clip3)"/>
<circle cx="1234.38" cy="601.70" r="4.6" fill="#ff0000" clip-path="url(#clip3)"/>
<circle cx="1262.68" cy="648.46" r="4.6" fill="#ff0000" clip-path="url(#clip3)"/>
<circle cx="1290.98" cy="596.51" r="4.6" fill="#ff0000" clip-path="url(#clip3)"/>
<circle cx="1319.28" cy="556.47" r="4.6" fill="#ff0000" clip-path="url(#clip3)"/>
<circle cx="1347.57" cy="566.56" r="4.6" fill="#ff0000" clip-path="url(#clip3)"/>
<circle cx="1375.87" cy="552.19" r="4.6" fill="#ff0000" clip-path="url(#clip3)"/>
<line x1="1400" y1="535.6" x2="1436" y2="535.6" stroke="#ff0000" stroke-width="2"/>
<circle cx="1418" cy="535.6" r="4.5" fill="#ff0000"/>
<text x="1442.60" y="541.80" font-size="15" fill="#ff0000" text-anchor="start" textLength="191.70" lengthAdjust="spacingAndGlyphs" >Max Gain over Frequency (3)</text>
</svg></body></html>
